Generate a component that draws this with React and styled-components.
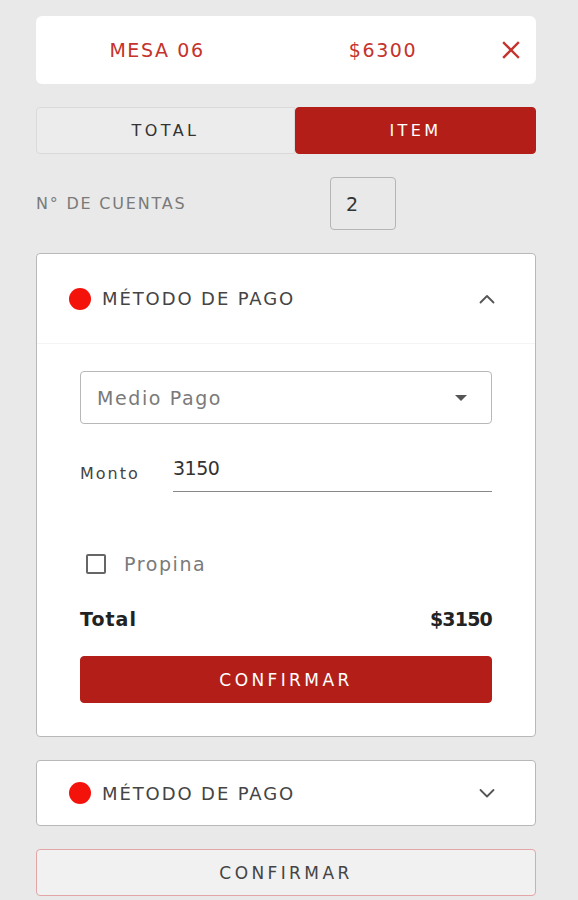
import React from "react";
import styled, { createGlobalStyle } from "styled-components";

const GlobalStyle = createGlobalStyle`
  html, body {
    margin: 0;
    padding: 0;
    background: #e9e9e9;
    font-family: "DejaVu Sans", "Open Sans", sans-serif;
  }
  * { box-sizing: border-box; }
`;

const Page = styled.div`
  width: 578px;
  padding: 16px 42px 4px 36px;
  display: flex;
  flex-direction: column;
`;

const HeaderCard = styled.div`
  height: 68px;
  background: #fff;
  border-radius: 6px;
  display: grid;
  grid-template-columns: 242px 210px 1fr;
  align-items: center;
  color: #c4332c;
  font-size: 19px;
  letter-spacing: 1.6px;
`;

const HeaderText = styled.span`
  text-align: center;
`;

const CloseBtn = styled.span`
  display: flex;
  justify-content: center;
  padding-right: 2px;
`;

const Toggle = styled.div`
  margin-top: 23px;
  height: 47px;
  display: grid;
  grid-template-columns: 259px 1fr;
`;

const ToggleBtn = styled.div`
  display: flex;
  align-items: center;
  justify-content: center;
  font-size: 16px;
  letter-spacing: 3.4px;
  background: ${(p) => (p.active ? "#b31f18" : "#ececec")};
  color: ${(p) => (p.active ? "#fff" : "#333")};
  border: 1px solid ${(p) => (p.active ? "#b31f18" : "#dadada")};
  border-radius: ${(p) => (p.active ? "4px" : "4px 0 0 4px")};
`;

const CountRow = styled.div`
  margin-top: 23px;
  height: 53px;
  display: flex;
  align-items: center;
`;

const CountLabel = styled.span`
  width: 294px;
  color: #7a7a7a;
  font-size: 16px;
  letter-spacing: 1.8px;
`;

const CountBox = styled.div`
  width: 66px;
  height: 53px;
  border: 1px solid #b5b5b5;
  border-radius: 4px;
  display: flex;
  align-items: center;
  padding-left: 15px;
  font-size: 19px;
  color: #333;
`;

const Card = styled.div`
  margin-top: ${(p) => p.top}px;
  background: #fff;
  border: 1px solid #b8b8b8;
  border-radius: 4px;
`;

const CardHead = styled.div`
  height: ${(p) => p.h}px;
  display: flex;
  align-items: center;
  padding: 0 38px 0 32px;
  border-bottom: ${(p) => (p.open ? "1px solid #f4f4f4" : "none")};
`;

const Dot = styled.span`
  width: 22px;
  height: 22px;
  border-radius: 50%;
  background: #f4130b;
  flex-shrink: 0;
`;

const HeadTitle = styled.span`
  margin-left: 11px;
  flex: 1;
  font-size: 18px;
  letter-spacing: 1.9px;
  color: #444;
`;

const CardBody = styled.div`
  padding: 27px 43px 33px 43px;
  display: flex;
  flex-direction: column;
`;

const Select = styled.div`
  height: 53px;
  border: 1px solid #b8b8b8;
  border-radius: 4px;
  display: flex;
  align-items: center;
  justify-content: space-between;
  padding: 0 24px 0 16px;
  font-size: 19px;
  letter-spacing: 1.6px;
  color: #7a7a7a;
`;

const Caret = styled.span`
  width: 0;
  height: 0;
  border-left: 6px solid transparent;
  border-right: 6px solid transparent;
  border-top: 6px solid #555;
`;

const AmountRow = styled.div`
  margin-top: 33px;
  display: flex;
  align-items: flex-end;
`;

const AmountLabel = styled.span`
  width: 93px;
  font-size: 16px;
  letter-spacing: 2px;
  color: #444;
  padding-bottom: 9px;
`;

const AmountInput = styled.div`
  flex: 1;
  border-bottom: 1px solid #888;
  font-size: 19px;
  letter-spacing: -0.5px;
  color: #333;
  padding-bottom: 12px;
`;

const TipRow = styled.div`
  margin-top: 61px;
  display: flex;
  align-items: center;
  padding-left: 6px;
  font-size: 19px;
  letter-spacing: 1.6px;
  color: #7a7a7a;
`;

const Checkbox = styled.span`
  width: 20px;
  height: 20px;
  border: 2px solid #666;
  border-radius: 2px;
  margin-right: 18px;
`;

const TotalRow = styled.div`
  margin-top: 33px;
  display: flex;
  justify-content: space-between;
  font-size: 19px;
  font-weight: bold;
  color: #222;
`;

const TotalLabel = styled.span`
  letter-spacing: 1px;
`;

const TotalValue = styled.span`
  letter-spacing: -0.8px;
`;

const ConfirmBtn = styled.button`
  margin-top: ${(p) => p.top || 0}px;
  height: 47px;
  width: 100%;
  border-radius: 4px;
  font-family: inherit;
  font-size: 17px;
  letter-spacing: 3.4px;
  background: ${(p) => (p.primary ? "#b31f18" : "#f1f1f1")};
  color: ${(p) => (p.primary ? "#fff" : "#444")};
  border: 1px solid ${(p) => (p.primary ? "#b31f18" : "#e3a5a5")};
`;

const Chevron = ({ up }) => (
  <svg width="20" height="20" viewBox="0 0 20 20" fill="none" stroke="#555" strokeWidth="1.8" strokeLinecap="round" strokeLinejoin="round">
    <path d={up ? "M3.5 13.5L10 7l6.5 6.5" : "M3.5 7L10 13.5 16.5 7"} />
  </svg>
);

export default function App() {
  return (
    <Page>
      <GlobalStyle />
      <HeaderCard>
        <HeaderText>MESA 06</HeaderText>
        <HeaderText>$6300</HeaderText>
        <CloseBtn>
          <svg width="20" height="20" viewBox="0 0 20 20" stroke="#c4332c" strokeWidth="2.4" strokeLinecap="square">
            <path d="M3 3l14 14M17 3L3 17" />
          </svg>
        </CloseBtn>
      </HeaderCard>

      <Toggle>
        <ToggleBtn>TOTAL</ToggleBtn>
        <ToggleBtn active>ITEM</ToggleBtn>
      </Toggle>

      <CountRow>
        <CountLabel>N° DE CUENTAS</CountLabel>
        <CountBox>2</CountBox>
      </CountRow>

      <Card top={23}>
        <CardHead h={90} open>
          <Dot />
          <HeadTitle>MÉTODO DE PAGO</HeadTitle>
          <Chevron up />
        </CardHead>
        <CardBody>
          <Select>
            Medio Pago
            <Caret />
          </Select>
          <AmountRow>
            <AmountLabel>Monto</AmountLabel>
            <AmountInput>3150</AmountInput>
          </AmountRow>
          <TipRow>
            <Checkbox />
            Propina
          </TipRow>
          <TotalRow>
            <TotalLabel>Total</TotalLabel>
            <TotalValue>$3150</TotalValue>
          </TotalRow>
          <ConfirmBtn primary top={26}>CONFIRMAR</ConfirmBtn>
        </CardBody>
      </Card>

      <Card top={23}>
        <CardHead h={64}>
          <Dot />
          <HeadTitle>MÉTODO DE PAGO</HeadTitle>
          <Chevron />
        </CardHead>
      </Card>

      <ConfirmBtn top={23}>CONFIRMAR</ConfirmBtn>
    </Page>
  );
}
